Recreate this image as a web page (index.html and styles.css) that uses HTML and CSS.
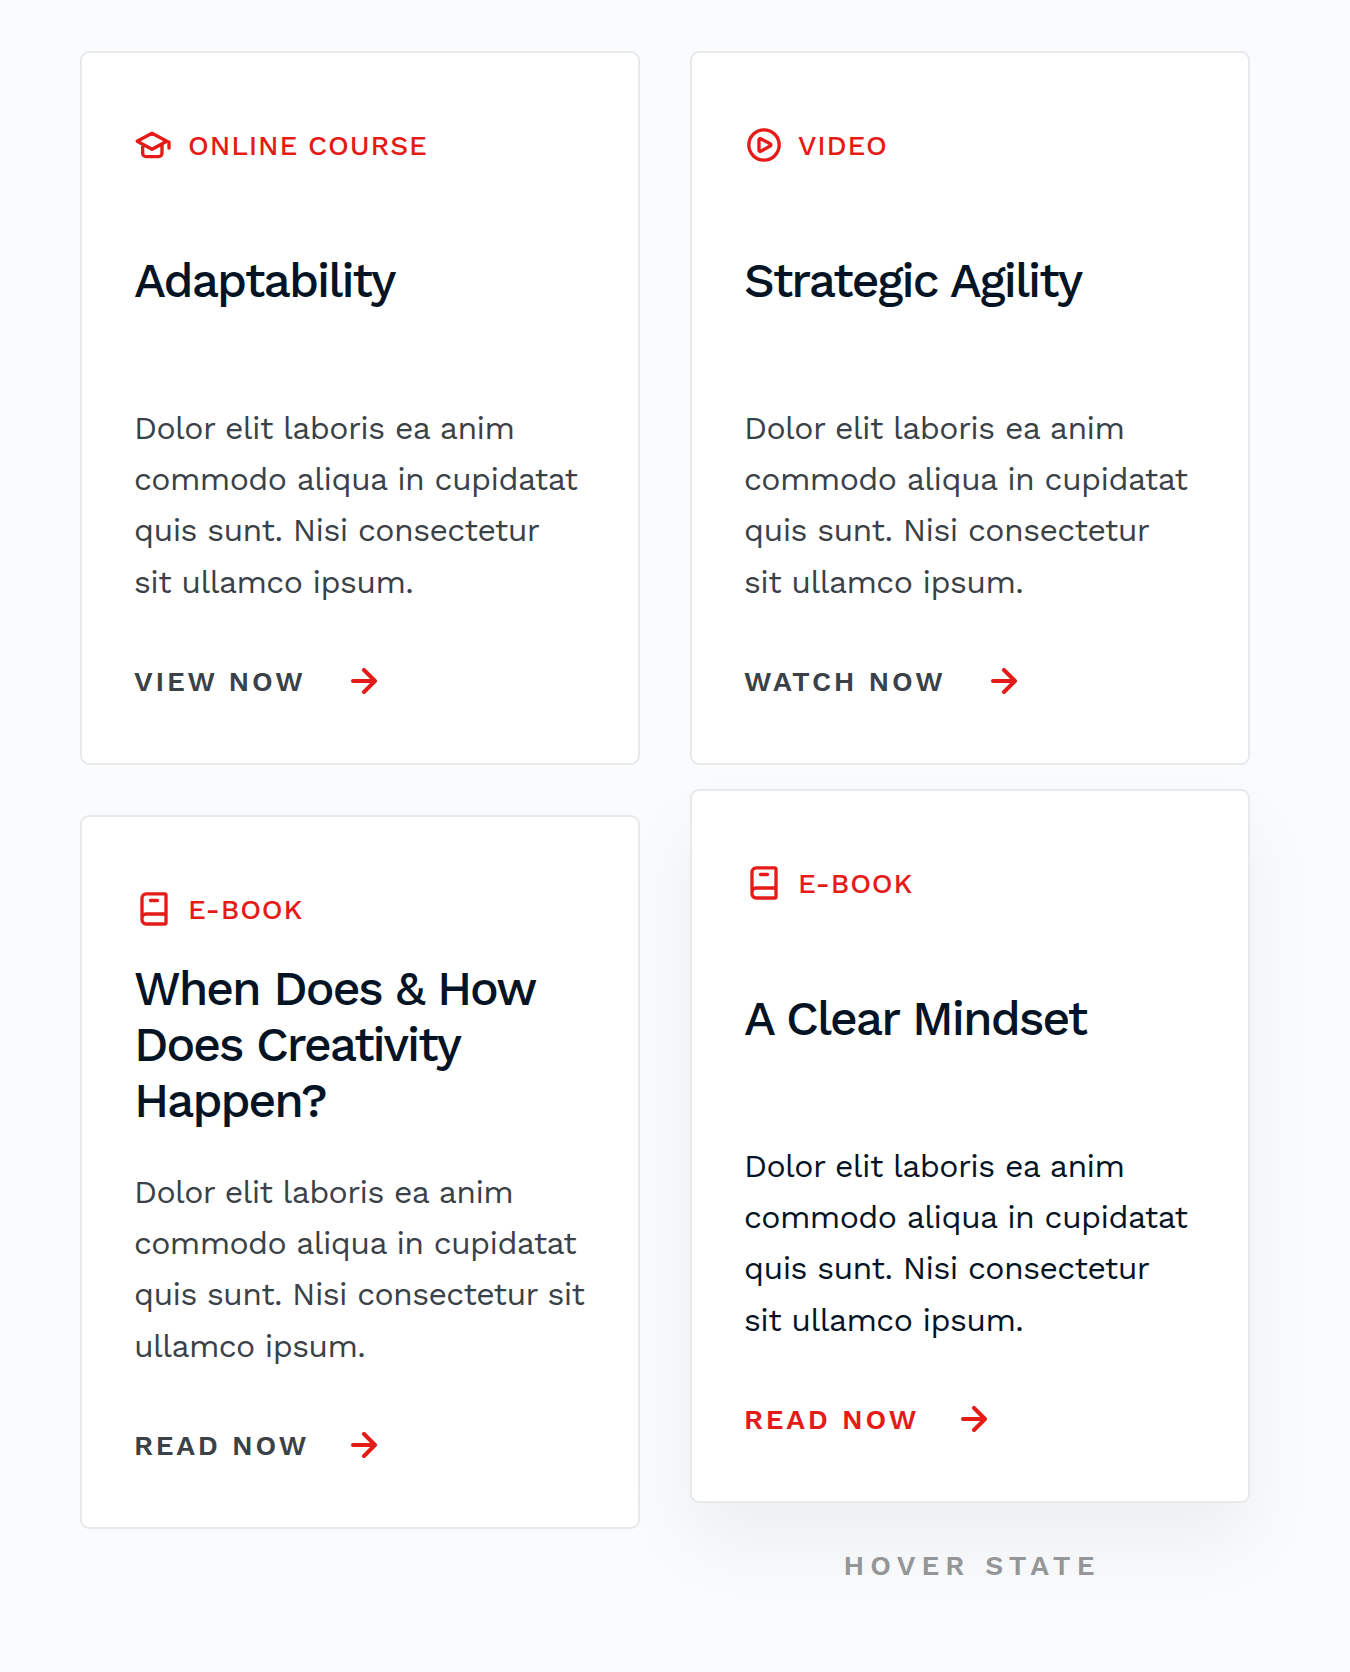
FILE: index.html
```html
<!DOCTYPE html>
<html lang="en">
<head>
<meta charset="utf-8">
<title>Resources</title>
<link rel="stylesheet" href="styles.css">
</head>
<body>
<main class="grid">
  <article class="card">
    <div class="label">
      <svg class="label__icon" viewBox="0 0 24 24" aria-hidden="true"><path d="M10.8 5 19.7 9.7 10.8 14.6 1.9 9.7zM19.7 9.7l1.3.6v3.6M5.2 11.6V17a2 2 0 0 0 2 2h7.6a2 2 0 0 0 2-2v-5.4"/></svg>
      <span class="label__text">ONLINE COURSE</span>
    </div>
    <h2 class="title">Adaptability</h2>
    <p class="copy">Dolor elit laboris ea anim<br>commodo aliqua in cupidatat<br>quis sunt. Nisi consectetur<br>sit ullamco ipsum.</p>
    <a class="cta"><span class="cta__text">VIEW NOW</span><svg class="cta__arrow" viewBox="0 0 26 26" aria-hidden="true"><path d="M2 13h22M13 2l11 11-11 11"/></svg></a>
  </article>

  <article class="card">
    <div class="label">
      <svg class="label__icon" viewBox="0 0 24 24" aria-hidden="true"><circle cx="12" cy="12" r="9.1"/><path d="M9 8.8a.7.7 0 0 1 1-.6l5.7 3.1a.7.7 0 0 1 0 1.3L10 15.8a.7.7 0 0 1-1-.6z"/></svg>
      <span class="label__text">VIDEO</span>
    </div>
    <h2 class="title">Strategic Agility</h2>
    <p class="copy">Dolor elit laboris ea anim<br>commodo aliqua in cupidatat<br>quis sunt. Nisi consectetur<br>sit ullamco ipsum.</p>
    <a class="cta"><span class="cta__text cta__text--watch">WATCH NOW</span><svg class="cta__arrow" viewBox="0 0 26 26" aria-hidden="true"><path d="M2 13h22M13 2l11 11-11 11"/></svg></a>
  </article>

  <article class="card">
    <div class="label">
      <svg class="label__icon" viewBox="0 0 24 24" aria-hidden="true"><path d="M7.3 2.9h11.1a.8.8 0 0 1 .8.8v16.5a.8.8 0 0 1-.8.8H7.3a2.5 2.5 0 0 1-2.5-2.5V5.4a2.5 2.5 0 0 1 2.5-2.5zM4.8 17.4A2.4 2.4 0 0 1 7.2 15h12M9.9 6.9h4.2"/></svg>
      <span class="label__text">E-BOOK</span>
    </div>
    <h2 class="title title--long">When Does &amp; How<br>Does Creativity<br>Happen?</h2>
    <p class="copy copy--tight">Dolor elit laboris ea anim<br>commodo aliqua in cupidatat<br>quis sunt. Nisi consectetur sit<br>ullamco ipsum.</p>
    <a class="cta"><span class="cta__text">READ NOW</span><svg class="cta__arrow" viewBox="0 0 26 26" aria-hidden="true"><path d="M2 13h22M13 2l11 11-11 11"/></svg></a>
  </article>

  <div class="raised">
    <article class="card card--hover">
      <div class="label">
        <svg class="label__icon" viewBox="0 0 24 24" aria-hidden="true"><path d="M7.3 2.9h11.1a.8.8 0 0 1 .8.8v16.5a.8.8 0 0 1-.8.8H7.3a2.5 2.5 0 0 1-2.5-2.5V5.4a2.5 2.5 0 0 1 2.5-2.5zM4.8 17.4A2.4 2.4 0 0 1 7.2 15h12M9.9 6.9h4.2"/></svg>
        <span class="label__text">E-BOOK</span>
      </div>
      <h2 class="title">A Clear Mindset</h2>
      <p class="copy">Dolor elit laboris ea anim<br>commodo aliqua in cupidatat<br>quis sunt. Nisi consectetur<br>sit ullamco ipsum.</p>
      <a class="cta"><span class="cta__text">READ NOW</span><svg class="cta__arrow" viewBox="0 0 26 26" aria-hidden="true"><path d="M2 13h22M13 2l11 11-11 11"/></svg></a>
    </article>
    <p class="caption">HOVER STATE</p>
  </div>
</main>
</body>
</html>
```
FILE: styles.css
```css
:root {
  --red: #e51b18;
  --ink: #041424;
  --body: #3a4147;
}

* {
  box-sizing: border-box;
}

body {
  margin: 0;
  min-height: 1672px;
  background: #fafbfd;
  font-family: "Work Sans", Inter, "Liberation Sans", sans-serif;
  color: var(--body);
}

.grid {
  display: grid;
  grid-template-columns: 560px 560px;
  gap: 50px;
  align-items: start;
  padding: 51px 80px 0;
}

.card {
  display: flex;
  flex-direction: column;
  height: 714px;
  padding: 72px 52px 0;
  border: 2px solid #e8e9eb;
  border-radius: 9px;
  background: #fff;
}

.raised {
  margin-top: -26px;
}

.card--hover {
  color: var(--ink);
  box-shadow: 0 40px 80px rgba(0, 0, 0, 0.055);
}

.label {
  display: flex;
  align-items: center;
  gap: 14px;
  height: 40px;
  color: var(--red);
}

.label__icon {
  flex: none;
  width: 40px;
  height: 40px;
  fill: none;
  stroke: currentColor;
  stroke-width: 2;
  stroke-linecap: round;
  stroke-linejoin: round;
}

.label__text {
  font-size: 28px;
  font-weight: 500;
  line-height: 33px;
  letter-spacing: 0.84px;
  white-space: nowrap;
}

.title {
  display: flex;
  flex-direction: column;
  justify-content: center;
  height: 168px;
  margin: 32px 0 0;
  font-size: 48px;
  font-weight: 500;
  line-height: 56px;
  letter-spacing: -1.92px;
  white-space: nowrap;
  color: var(--ink);
}

.title--long {
  letter-spacing: -2.02px;
}

.copy {
  margin: 38px 0 0;
  font-size: 32px;
  line-height: 51.2px;
  letter-spacing: -0.59px;
  white-space: nowrap;
}

.copy--tight {
  letter-spacing: -0.64px;
}

.cta {
  display: flex;
  align-items: center;
  gap: 45px;
  height: 30px;
  margin-top: 59px;
}

.cta__text {
  flex: none;
  width: 172px;
  font-size: 28px;
  font-weight: 600;
  line-height: 30px;
  letter-spacing: 2.76px;
  white-space: nowrap;
}

.cta__text--watch {
  width: 202px;
}

.card--hover .cta__text {
  color: var(--red);
}

.cta__arrow {
  flex: none;
  width: 26px;
  height: 26px;
  margin-bottom: 2px;
  fill: none;
  stroke: var(--red);
  stroke-width: 4;
  stroke-linecap: round;
  stroke-linejoin: round;
}

.caption {
  margin: 47px 0 0;
  padding-left: 4px;
  font-size: 28px;
  font-weight: 600;
  line-height: 32px;
  letter-spacing: 6.1px;
  text-align: center;
  color: #949698;
}
```
